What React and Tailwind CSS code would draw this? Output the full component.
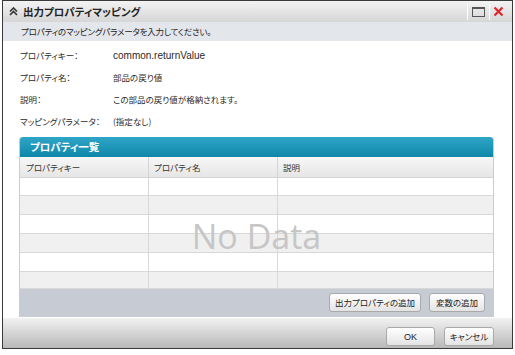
import { useState } from 'react';

const jp = "font-['Noto_Sans_CJK_JP','Noto_Sans',sans-serif] [font-feature-settings:'palt'] whitespace-nowrap";

const rows = [
  { h: 'h-[18px]', bg: 'bg-white' },
  { h: 'h-[19px]', bg: 'bg-[#f0f0f0]' },
  { h: 'h-[19px]', bg: 'bg-white' },
  { h: 'h-[19px]', bg: 'bg-[#f0f0f0]' },
  { h: 'h-[19px]', bg: 'bg-white' },
  { h: 'h-[17px]', bg: 'bg-[#f0f0f0]' },
];

const Btn = ({ children, className = '' }) => (
  <button
    className={
      'h-[19px] rounded-[3px] border border-[#a9a9a9] bg-gradient-to-b from-white to-[#e4e4e4] text-[8.5px] text-[#222] leading-none shadow-[inset_0_1px_0_#fff] ' +
      jp +
      ' ' +
      className
    }
  >
    {children}
  </button>
);

const Field = ({ label, value, latin }) => (
  <div className="flex h-[22px] items-center">
    <span className={'w-[93px] shrink-0 text-[8.5px] text-[#2a2a2a] ' + jp}>{label}</span>
    <span
      className={
        latin
          ? "text-[10px] text-[#2a2a2a] font-['Liberation_Sans',sans-serif]"
          : 'text-[8.5px] text-[#2a2a2a] ' + jp
      }
    >
      {value}
    </span>
  </div>
);

export default function App() {
  const [data] = useState([]);

  return (
    <div className="w-[515px] h-[355px] bg-white">
      <div className="ml-[2px] w-[511px] h-[349px] border border-[#3a3a3a] flex flex-col bg-white">
        {/* タイトルバー */}
        <div className="h-[21px] flex items-center bg-gradient-to-b from-[#f3f3f3] to-[#d6d6d6] pl-[6px] pr-[8px]">
          <svg width="9" height="9" viewBox="0 0 9 9" className="mr-[5px]">
            <path d="M1 4.5 L4.5 1 L8 4.5 M1 8 L4.5 4.5 L8 8" fill="none" stroke="#333" strokeWidth="1.6" />
          </svg>
          <span className={'text-[10.5px] font-bold text-[#222] ' + jp}>出力プロパティマッピング</span>
          <div className="ml-auto flex items-center h-full">
            <div className="w-px h-[16px] bg-[#bdbdbd] border-r border-white mr-[4px]" />
            <div className="w-[13px] h-[10px] border border-[#555] border-t-2 mr-[4px]" />
            <div className="w-px h-[16px] bg-[#bdbdbd] border-r border-white mr-[3px]" />
            <svg width="11" height="11" viewBox="0 0 11 11">
              <path d="M1.5 1.5 L9.5 9.5 M9.5 1.5 L1.5 9.5" stroke="#e0262b" strokeWidth="2.2" />
            </svg>
          </div>
        </div>

        {/* 説明バー */}
        <div className={'h-[19px] flex items-center bg-[#e3e6eb] pl-[18px] text-[8.5px] text-[#222] tracking-[-0.2px] ' + jp}>
          プロパティのマッピングパラメータを入力してください。
        </div>

        {/* 本体 */}
        <div className="flex-1 pt-[3px] pl-[17px]">
          <Field label="プロパティキー：" value="common.returnValue" latin />
          <Field label="プロパティ名：" value="部品の戻り値" />
          <Field label="説明：" value="この部品の戻り値が格納されます。" />
          <Field label="マッピングパラメータ：" value="(指定なし)" />

          {/* プロパティ一覧 */}
          <div className="mt-[5px] -ml-[1px] w-[475px] border border-[#c9ccd2] border-t-0 rounded-t-[3px]">
            <div
              className={
                'h-[20px] flex items-center pl-[10px] rounded-t-[3px] bg-gradient-to-b from-[#2ea6c6] to-[#0b87a9] text-white text-[10.5px] font-bold ' +
                jp
              }
            >
              プロパティ一覧
            </div>
            <div
              className={
                'h-[21px] grid grid-cols-[129px_129px_1fr] border-b border-[#d4d4d4] bg-gradient-to-b from-[#f7f7f7] to-[#e6e6e6] text-[8.5px] text-[#333] ' +
                jp
              }
            >
              <div className="flex items-center pl-[6px] border-r border-[#d4d4d4]">プロパティキー</div>
              <div className="flex items-center pl-[5px] border-r border-[#d4d4d4]">プロパティ名</div>
              <div className="flex items-center pl-[5px]">説明</div>
            </div>
            <div className="relative">
              {rows.map((r, i) => (
                <div
                  key={i}
                  className={'grid grid-cols-[129px_129px_1fr] border-b border-[#d8d8d8] ' + r.h + ' ' + r.bg}
                >
                  <div className="border-r border-[#d8d8d8]" />
                  <div className="border-r border-[#d8d8d8]" />
                  <div />
                </div>
              ))}
              {data.length === 0 && (
                <div className="absolute inset-0 flex items-center justify-center pt-[5px] pointer-events-none">
                  <span className="text-[34px] text-[#c6c6c6] font-['Open_Sans',sans-serif]">No Data</span>
                </div>
              )}
            </div>
            <div className="h-[27px] flex items-center justify-end gap-[8px] pr-[8px] bg-[#c6cbd4]">
              <Btn className="w-[92px]">出力プロパティの追加</Btn>
              <Btn className="w-[56px]">変数の追加</Btn>
            </div>
          </div>
        </div>

        {/* フッター */}
        <div className="h-[30px] flex items-start justify-end gap-[9px] pt-[9px] pr-[18px] bg-gradient-to-b from-[#f2f2f2] to-[#b9b9b9]">
          <Btn className="w-[49px] h-[18px]">
            <span className="font-['Liberation_Sans',sans-serif] text-[9px]">OK</span>
          </Btn>
          <Btn className="w-[50px] h-[18px]">キャンセル</Btn>
        </div>
      </div>
    </div>
  );
}
